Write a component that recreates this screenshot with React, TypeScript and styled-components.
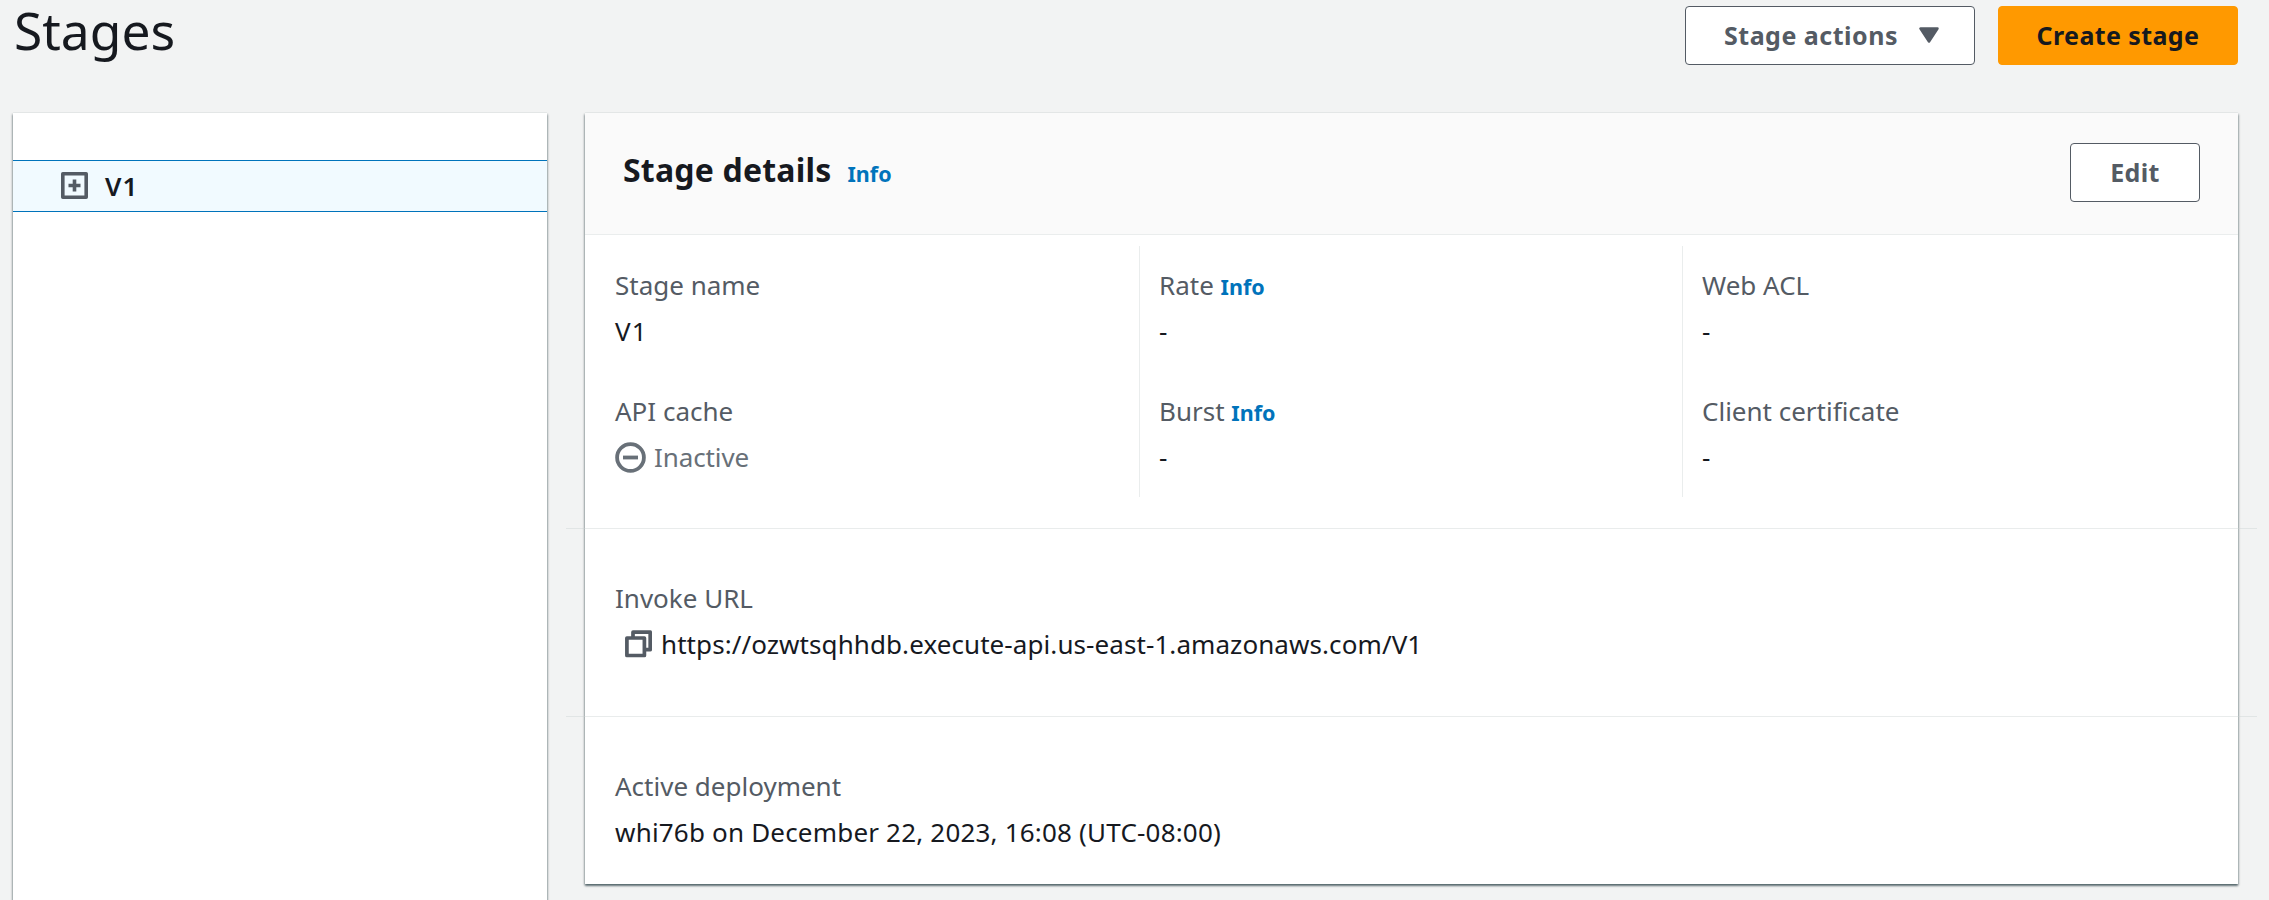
import React from "react";
import styled, { createGlobalStyle } from "styled-components";

const Global = createGlobalStyle`
  * { box-sizing: border-box; }
  body { margin: 0; background: #f2f3f3; color: #16191f; font-family: "Noto Sans", sans-serif; font-size: 26px; line-height: 44px; overflow: hidden; }
  h1, h2, dl, dt, dd { margin: 0; }
`;

const Page = styled.main`
  height: 900px; padding: 0 31px 0 13px; display: flex; flex-direction: column; overflow: hidden;
`;
const PageHeader = styled.header`
  height: 113px; flex: none; display: flex; justify-content: space-between; align-items: flex-start;
`;
const Title = styled.h1`
  font-size: 51.5px; font-weight: 400; line-height: 60px; padding: 0 8px 0 1px;
`;
const Actions = styled.div`
  display: flex; gap: 23px; padding-top: 6px;
`;
const Button = styled.button<{ $primary?: boolean; $width: number }>`
  width: ${(p) => p.$width}px; height: 59px; border-radius: 4px; padding: 0 0 1px;
  display: flex; align-items: center; justify-content: center; gap: 21px;
  border: 1px solid ${(p) => (p.$primary ? "#ff9900" : "#545b64")};
  background: ${(p) => (p.$primary ? "#ff9900" : "#fff")};
  color: ${(p) => (p.$primary ? "#16191f" : "#545b64")};
  font: 700 25px/40px "Noto Sans", sans-serif; letter-spacing: 0.4px;
`;
const MenuButton = styled(Button)`
  padding-left: 3px; letter-spacing: 0.5px;
`;
const Columns = styled.div`
  display: grid; grid-template-columns: 534px 1653px; gap: 38px; flex: 1; align-items: start;
`;
const Panel = styled.section`
  background: #fff;
  box-shadow: 0 2px 2px 0 rgba(0, 28, 36, 0.5), 1px 1px 2px 0 rgba(0, 28, 36, 0.2), -1px 1px 2px 0 rgba(0, 28, 36, 0.2), 0 -1px 0 0 #eaeded;
`;
const TreePanel = styled(Panel)`
  height: 820px; padding-top: 47px;
`;
const TreeItem = styled.div`
  height: 52px; display: flex; align-items: center; gap: 17px; padding: 0 0 1px 48px;
  border: solid #0073bb; border-width: 1px 0; background: #f1faff; font-weight: 600; letter-spacing: 1.2px;
`;
const DetailsPanel = styled(Panel)`
  height: 771px;
`;
const PanelHeader = styled.div`
  height: 122px; display: flex; justify-content: space-between; align-items: flex-start;
  padding: 30px 38px 0 38px; background: #fafafa; border-bottom: 1px solid #eaeded;
`;
const PanelTitle = styled.h2`
  font-size: 32px; line-height: 54px; font-weight: 700; letter-spacing: 0.2px; display: flex; align-items: baseline; gap: 16px;
`;
const Info = styled.a`
  color: #0073bb; font-size: 21.5px; line-height: 1; font-weight: 700; letter-spacing: 0;
`;
const Grid = styled.div`
  height: 293px; padding: 11px 24px 0 16px; display: grid; grid-template-columns: 538px 543px 1fr;
`;
const Col = styled.dl`
  height: 251px; padding: 16px 0 0 14px; display: flex; flex-direction: column; gap: 34px;
  & + & { border-left: 1px solid #eaeded; padding-left: 19px; }
`;
const Row = styled.dl`
  height: 188px; margin: 0 -19px; padding: 46px 49px 0;
  border-top: 1px solid rgba(200, 208, 208, 0.4);
`;
const Term = styled.dt`
  color: #545b64; line-height: 46px;
`;
const Value = styled.dd<{ $muted?: boolean; $indent?: boolean; $tracking?: number }>`
  line-height: 46px; display: flex; align-items: center; gap: ${(p) => (p.$indent ? 9 : 8)}px;
  color: ${(p) => (p.$muted ? "#687078" : "#16191f")};
  padding-left: ${(p) => (p.$indent ? 10 : 0)}px;
  letter-spacing: ${(p) => p.$tracking ?? 0}px;
`;

const Field = ({ label, info, children, muted, tracking }: { label: string; info?: boolean; children: React.ReactNode; muted?: boolean; tracking?: number }) => (
  <div>
    <Term>{label} {info && <Info>Info</Info>}</Term>
    <Value $muted={muted} $tracking={tracking}>{children}</Value>
  </div>
);

export default function App() {
  return (
    <>
      <Global />
      <Page>
        <PageHeader>
          <Title>Stages</Title>
          <Actions>
            <MenuButton $width={290}>Stage actions
              <svg width="20" height="17" viewBox="0 0 20 17"><path d="M1.500 1.500h17l-8.500 13z" fill="#545b64" stroke="#545b64" strokeWidth="2.500" strokeLinejoin="round" /></svg>
            </MenuButton>
            <Button $width={240} $primary>Create stage</Button>
          </Actions>
        </PageHeader>
        <Columns>
          <TreePanel>
            <TreeItem>
              <svg width="27" height="27" viewBox="0 0 27 27" fill="none" stroke="#545b64" strokeWidth="3.600" strokeLinejoin="round"><rect x="1.800" y="1.800" width="23.400" height="23.400" /><path d="M7.500 13.500h12M13.500 7.500v12" /></svg>
              V1
            </TreeItem>
          </TreePanel>
          <DetailsPanel>
            <PanelHeader>
              <PanelTitle>Stage details <Info>Info</Info></PanelTitle>
              <Button $width={130}>Edit</Button>
            </PanelHeader>
            <Grid>
              <Col>
                <Field label="Stage name" tracking={1.2}>V1</Field>
                <Field label="API cache" muted tracking={-0.1}>
                  <svg width="31" height="31" viewBox="0 0 31 31" fill="none" stroke="#687078" strokeWidth="3.800"><circle cx="15.500" cy="15.500" r="13.400" /><path d="M8 15.500h15" /></svg>
                  Inactive
                </Field>
              </Col>
              <Col>
                <Field label="Rate" info>-</Field>
                <Field label="Burst" info>-</Field>
              </Col>
              <Col>
                <Field label="Web ACL">-</Field>
                <Field label="Client certificate">-</Field>
              </Col>
            </Grid>
            <Row>
              <Term>Invoke URL</Term>
              <Value $indent $tracking={0.08}>
                <svg width="27" height="28" viewBox="0 0 27 28" fill="none" stroke="#545b64" strokeWidth="3.700" strokeLinejoin="round"><rect x="1.900" y="8" width="17.500" height="17.500" /><path d="M8 8V2.200h17.200v17.400h-5.800" /></svg>
                https://ozwtsqhhdb.execute-api.us-east-1.amazonaws.com/V1
              </Value>
            </Row>
            <Row>
              <Term>Active deployment</Term>
              <Value $tracking={0.19}>whi76b on December 22, 2023, 16:08 (UTC-08:00)</Value>
            </Row>
          </DetailsPanel>
        </Columns>
      </Page>
    </>
  );
}
